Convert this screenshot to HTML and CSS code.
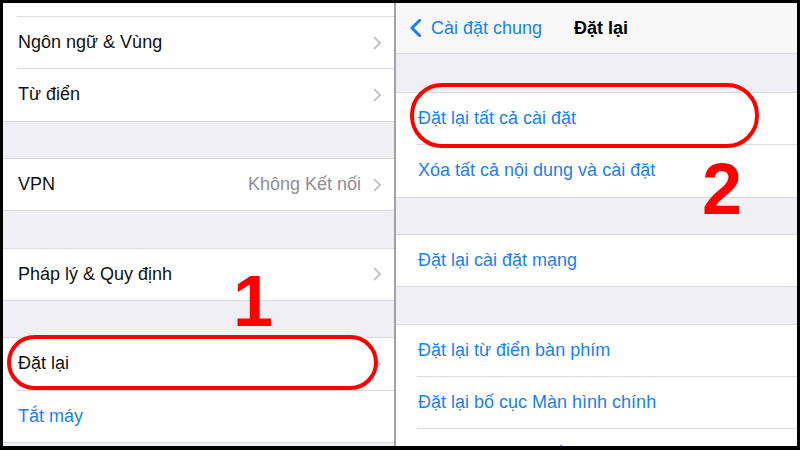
FILE: index.html
```html
<!DOCTYPE html>
<html lang="vi">
<head>
  <meta charset="UTF-8" />
  <title>Đặt lại</title>
  <link rel="stylesheet" href="styles.css">
</head>
<body>
  <div class="frame">
    <!-- Cột trái: Cài đặt chung -->
    <section class="pane left">
      <div class="group top">
        <div class="row stub"></div>
        <div class="row"><span>Ngôn ngữ &amp; Vùng</span><svg class="chev" viewBox="0 0 8 14"><polyline points="1,1 7,7 1,13"/></svg></div>
        <div class="row"><span>Từ điển</span><svg class="chev" viewBox="0 0 8 14"><polyline points="1,1 7,7 1,13"/></svg></div>
      </div>
      <div class="group">
        <div class="row"><span>VPN</span><span class="end"><span class="value">Không Kết nối</span><svg class="chev" viewBox="0 0 8 14"><polyline points="1,1 7,7 1,13"/></svg></span></div>
      </div>
      <div class="group">
        <div class="row"><span>Pháp lý &amp; Quy định</span><svg class="chev" viewBox="0 0 8 14"><polyline points="1,1 7,7 1,13"/></svg></div>
      </div>
      <div class="group">
        <div class="row"><span>Đặt lại</span><svg class="chev" viewBox="0 0 8 14"><polyline points="1,1 7,7 1,13"/></svg></div>
        <div class="row link"><span>Tắt máy</span></div>
      </div>
    </section>

    <div class="divider"></div>

    <!-- Cột phải: Đặt lại -->
    <section class="pane right">
      <header class="nav">
        <svg class="back" viewBox="0 0 11 18"><polyline points="9.5,1.5 2,9 9.5,16.5"/></svg>
        <span class="back-label">Cài đặt chung</span>
        <span class="title">Đặt lại</span>
      </header>
      <div class="group first">
        <div class="row link">Đặt lại tất cả cài đặt</div>
        <div class="row link">Xóa tất cả nội dung và cài đặt</div>
      </div>
      <div class="group">
        <div class="row link">Đặt lại cài đặt mạng</div>
      </div>
      <div class="group">
        <div class="row link">Đặt lại từ điển bàn phím</div>
        <div class="row link">Đặt lại bố cục Màn hình chính</div>
        <div class="row link last">Đặt lại vị trí &amp; quyền riêng tư</div>
      </div>
    </section>

    <!-- Đánh dấu màu đỏ -->
    <div class="ring ring-left"></div>
    <div class="ring ring-right"></div>
    <span class="step step-1">1</span>
    <span class="step step-2">2</span>
  </div>
</body>
</html>
```

FILE: styles.css
```css
body {
  margin: 0;
  background: #000;
  font-family: "Liberation Sans", Arial, sans-serif;
}

.frame {
  position: relative;
  width: 800px;
  height: 450px;
  box-sizing: border-box;
  padding: 3px 3px 4px 3px;
  display: flex;
  overflow: hidden;
}

.pane {
  background: #efeff4;
  overflow: hidden;
}

.left {
  width: 391px;
}

.right {
  flex: 1;
}

.divider {
  width: 2px;
  background: #a2a2a6;
}

.group {
  background: #fff;
  border-top: 1px solid #d9d9de;
  border-bottom: 1px solid #d9d9de;
}

.group + .group {
  margin-top: 36.33px;
}

.group.top {
  border-top: none;
}

.row {
  height: 51.33px;
  margin-left: 14px;
  padding: 0 13px 0 1px;
  display: flex;
  align-items: center;
  justify-content: space-between;
  font-size: 18px;
  color: #111;
}

.row + .row {
  border-top: 1px solid #d9d9de;
}

.row.stub {
  height: 13px;
}

.right .row {
  margin-left: 21px;
  padding-left: 1px;
}

/* hàng cuối bị cắt ở mép dưới ảnh gốc */
.right .row.last {
  align-items: flex-start;
  padding-top: 14px;
  box-sizing: border-box;
}

.link {
  color: #1a7ff4;
}

.end {
  display: flex;
  align-items: center;
}

.value {
  color: #8e8e93;
  margin-right: 12px;
}

.chev {
  width: 8px;
  height: 14px;
  fill: none;
  stroke: #c6c6cb;
  stroke-width: 2;
}

.nav {
  height: 50px;
  background: #f8f8f9;
  border-bottom: 1px solid #d9d9de;
  display: flex;
  align-items: center;
  padding-left: 14px;
  font-size: 18px;
}

.back {
  width: 11px;
  height: 18px;
  fill: none;
  stroke: #1a7ff4;
  stroke-width: 3;
  stroke-linecap: round;
  stroke-linejoin: round;
}

.back-label {
  color: #1a7ff4;
  margin-left: 10px;
}

.title {
  font-weight: bold;
  color: #000;
  margin-left: 32px;
}

.group.first {
  margin-top: 38px;
}

.ring {
  position: absolute;
  box-sizing: border-box;
  border: 4px solid #f00;
  border-radius: 32px;
}

.ring-left {
  left: 7px;
  top: 335px;
  width: 371px;
  height: 55px;
}

.ring-right {
  left: 410px;
  top: 83px;
  width: 349px;
  height: 65px;
}

.step {
  position: absolute;
  font-size: 72px;
  font-weight: bold;
  line-height: 1;
  color: #f00;
}

.step-1 {
  left: 233px;
  top: 265px;
}

.step-2 {
  left: 702px;
  top: 153px;
}
```
